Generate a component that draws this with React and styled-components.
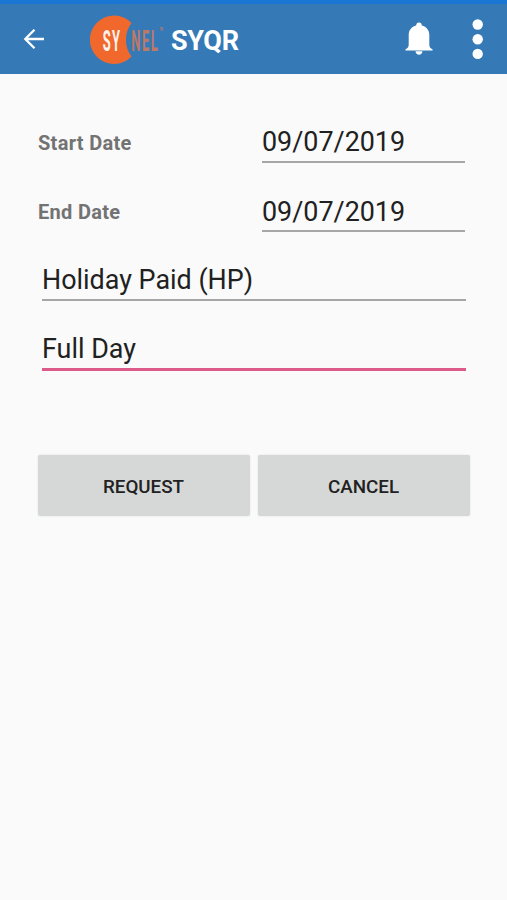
import React from 'react';
import styled, { createGlobalStyle } from 'styled-components';

const GlobalStyle = createGlobalStyle`
    * {
        box-sizing: border-box;
    }

    body {
        margin: 0;
        background: #fafafa;
        font-family: Roboto, 'Liberation Sans', sans-serif;
    }
`;

const Screen = styled.div`
    display: flex;
    flex-direction: column;
    min-height: 100vh;
    background: #fafafa;
`;

const StatusBar = styled.div`
    height: 4px;
    background: #1976d2;
`;

const Toolbar = styled.header`
    display: flex;
    align-items: center;
    height: 70px;
    padding: 0 23px;
    background: #357ab7;
    color: #fff;

    svg {
        display: block;
        flex: none;
    }
`;

const IconButton = styled.button`
    display: flex;
    padding: 0;
    margin-left: ${({ $gap }) => {
        return $gap || 0;
    }}px;
    border: 0;
    background: none;
    color: inherit;
    cursor: pointer;
`;

const Brand = styled.div`
    display: flex;
    align-items: center;
    flex: 1;
    margin-left: 45px;
`;

const Title = styled.h1`
    margin: 3px 0 0 5px;
    font-size: 27px;
    font-weight: 700;
    line-height: 32px;
    letter-spacing: -0.3px;
`;

const Form = styled.form`
    display: flex;
    flex-direction: column;
    padding: 34px 37px 0 38px;
`;

const DateRow = styled.div`
    display: grid;
    grid-template-columns: 1fr 203px;
    align-items: center;
    height: 69px;
    padding-right: 5px;
`;

const Label = styled.label`
    color: #737373;
    font-size: 20px;
    font-weight: 700;
    line-height: 24px;
    letter-spacing: 0.3px;
`;

const Field = styled.div`
    height: 69px;
    padding-top: 17px;
    color: #212121;
    font-size: 26.9px;
    line-height: 34px;
    white-space: nowrap;
`;

const FieldValue = styled.div`
    height: ${({ $active }) => {
        return $active ? 39 : 38;
    }}px;
    border-bottom: ${({ $active }) => {
        return $active ? '3px solid #dc5a89' : '2px solid #a6a6a6';
    }};

    ${DateRow} + ${DateRow} & {
        line-height: 36px;
    }
`;

const SelectGroup = styled.div`
    padding: 0 4px;
`;

const Actions = styled.div`
    display: grid;
    grid-template-columns: 1fr 1fr;
    gap: 8px;
    margin-top: 71px;
`;

const ActionButton = styled.button`
    height: 61px;
    padding: 2px 1px 0 0;
    border: 0;
    border-radius: 2px;
    background: #d6d7d7;
    box-shadow: 0 0 2px rgba(0, 0, 0, 0.12);
    color: #212121;
    font-family: inherit;
    font-size: 18.8px;
    font-weight: 500;
    text-transform: uppercase;
    cursor: pointer;
`;

const BackIcon = () => {
    return (
        <svg width="22" height="22" viewBox="0 0 22 22" fill="none" stroke="currentColor" strokeWidth="2.3">
            <path d="M21 11H3M11.5 1.8L2.3 11l9.2 9.2" />
        </svg>
    );
};

const BellIcon = () => {
    return (
        <svg width="28" height="34" viewBox="0 0 28 34" fill="currentColor">
            <path d="M14 .5c1.7 0 2.8 1.2 2.8 2.9 4.7 1.2 7.5 4.7 7.5 9.4v9.6c0 2.6 1 3.6 3.2 4.8v1.2H.5v-1.2c2.2-1.2 3.2-2.2 3.2-4.8v-9.6c0-4.7 2.8-8.2 7.5-9.4 0-1.7 1.1-2.9 2.8-2.9z" />
            <path d="M10.5 29.3h7c-.3 2.2-1.6 3.4-3.5 3.4s-3.2-1.2-3.5-3.4z" />
        </svg>
    );
};

const MoreIcon = () => {
    return (
        <svg width="12" height="42" viewBox="0 0 12 42" fill="currentColor">
            <circle cx="5.7" cy="6.5" r="5.2" />
            <circle cx="5.7" cy="21.2" r="5.2" />
            <circle cx="5.7" cy="35.9" r="5.2" />
        </svg>
    );
};

// Orange disc bitten by the second half of the wordmark
const Logo = () => {
    return (
        <svg width="76" height="50" viewBox="0 0 76 50">
            <path d="M41.5 9A24.2 24.2 0 1 0 41.5 42.5A28 28 0 0 1 41.5 9z" fill="#f1682c" />
            <g fontFamily="Roboto, sans-serif" fontSize="30" fontWeight="700">
                <text transform="translate(12.8 36.5) scale(.43 1)" fill="#fff3ec" letterSpacing="3">
                    SY
                </text>
                <text transform="translate(41.3 36.5) scale(.43 1)" fill="#bd7866" letterSpacing="3.5">
                    NEL
                    <tspan dy="-14" fontSize="14" fontWeight="500" letterSpacing="0">
                        ™
                    </tspan>
                </text>
            </g>
        </svg>
    );
};

const DateField = ({ label, value }) => {
    return (
        <DateRow>
            <Label>{label}</Label>
            <Field>
                <FieldValue>{value}</FieldValue>
            </Field>
        </DateRow>
    );
};

const SelectField = ({ value, active }) => {
    return (
        <Field>
            <FieldValue $active={active}>{value}</FieldValue>
        </Field>
    );
};

const App = () => {
    return (
        <>
            <GlobalStyle />
            <Screen>
                <StatusBar />
                <Toolbar>
                    <IconButton aria-label="Back">
                        <BackIcon />
                    </IconButton>
                    <Brand>
                        <Logo />
                        <Title>SYQR</Title>
                    </Brand>
                    <IconButton aria-label="Notifications">
                        <BellIcon />
                    </IconButton>
                    <IconButton aria-label="More options" $gap={39}>
                        <MoreIcon />
                    </IconButton>
                </Toolbar>
                <Form>
                    <DateField label="Start Date" value="09/07/2019" />
                    <DateField label="End Date" value="09/07/2019" />
                    <SelectGroup>
                        <SelectField value="Holiday Paid (HP)" />
                        <SelectField value="Full Day" active />
                    </SelectGroup>
                    <Actions>
                        <ActionButton type="button">Request</ActionButton>
                        <ActionButton type="button">Cancel</ActionButton>
                    </Actions>
                </Form>
            </Screen>
        </>
    );
};

export default App;
